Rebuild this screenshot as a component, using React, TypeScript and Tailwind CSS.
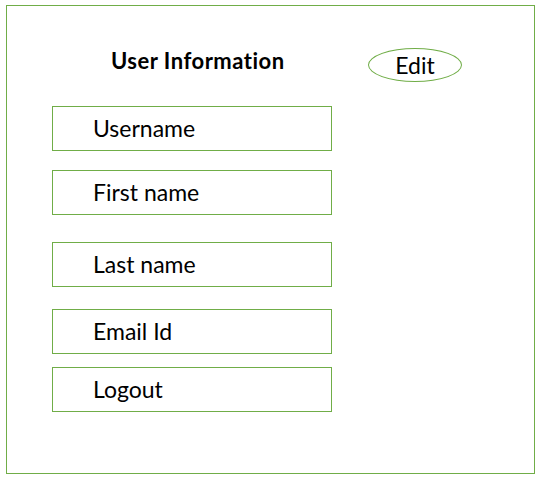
const fields = [
  { label: "Username", mt: "mt-[23px]" },
  { label: "First name", mt: "mt-[19px]" },
  { label: "Last name", mt: "mt-[27px]" },
  { label: "Email Id", mt: "mt-[22px]" },
  { label: "Logout", mt: "mt-[13px]" },
];

export default function App() {
  return (
    <div className="bg-white w-[543px] h-[479px] pt-[5px] pl-[6px] font-['Lato',sans-serif] text-black">
      <div className="w-[529px] h-[469px] border border-[#70ad47] pl-[45px] pt-[42px]">
        <div className="flex items-start h-[35px]">
          <div className="w-[316px] pl-[59px] text-[22px] font-bold leading-[28px] -mt-[1px] tracking-[0.5px]">
            User Information
          </div>
          <div className="w-[94px] h-[34px] rounded-[50%] border border-[#70ad47] flex items-center justify-center text-[23px] leading-none">
            Edit
          </div>
        </div>
        {fields.map((f) => (
          <div
            key={f.label}
            className={`${f.mt} w-[280px] h-[45px] border border-[#70ad47] flex items-center pl-[40px] text-[23px] leading-none`}
          >
            {f.label}
          </div>
        ))}
      </div>
    </div>
  );
}
